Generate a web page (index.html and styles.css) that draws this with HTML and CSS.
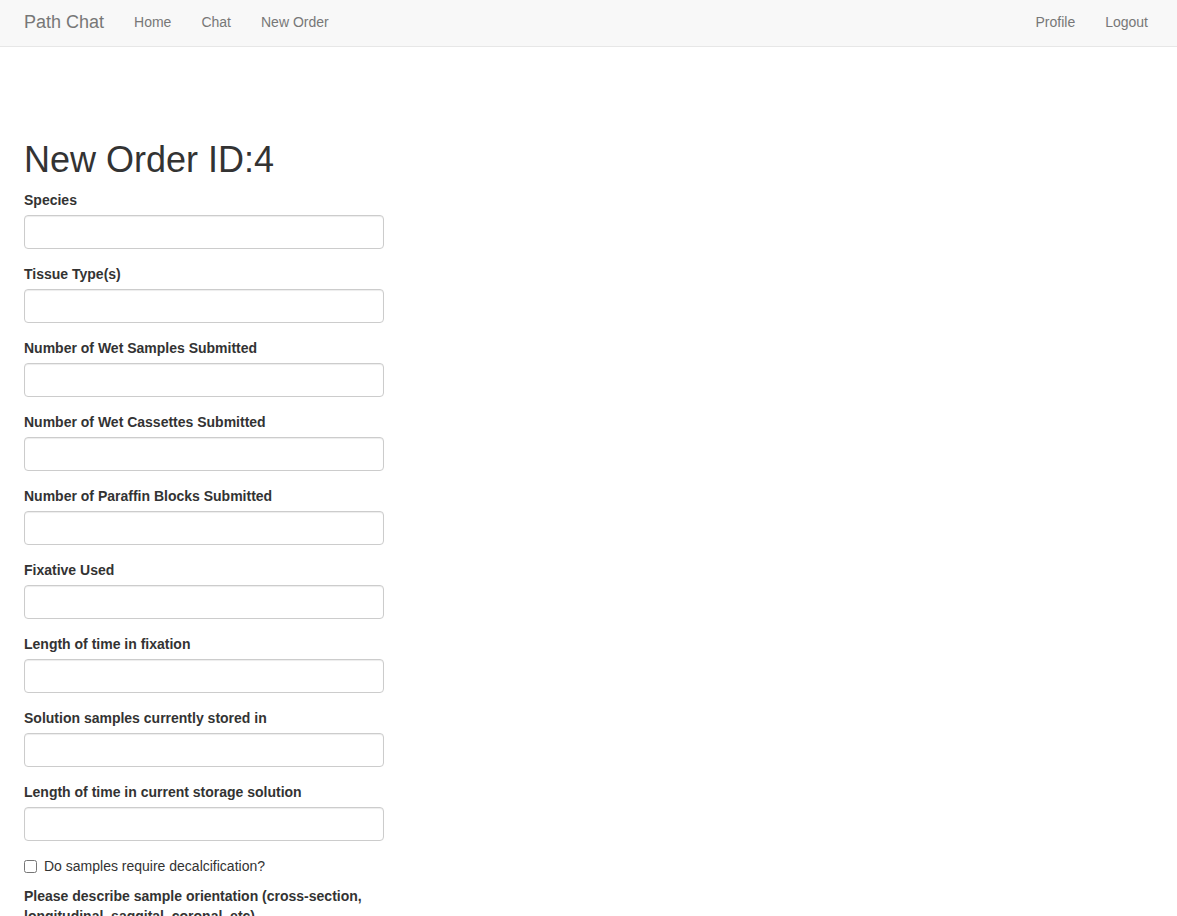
FILE: index.html
```html
<!DOCTYPE html>
<html>
<head>
<meta charset="utf-8">
<title>Path Chat - New Order</title>
<link rel="stylesheet" href="styles.css">
</head>
<body>
<nav class="navbar">
  <div class="nav-left">
    <a class="brand" href="#">Path Chat</a>
    <a class="nav-link" href="#">Home</a>
    <a class="nav-link" href="#">Chat</a>
    <a class="nav-link" href="#">New Order</a>
  </div>
  <div class="nav-right">
    <a class="nav-link" href="#">Profile</a>
    <a class="nav-link" href="#">Logout</a>
  </div>
</nav>
<main class="content">
  <h1 class="title">New Order ID:4</h1>
  <form class="order-form">
    <div class="form-group"><label>Species</label><input class="form-control" type="text"></div>
    <div class="form-group"><label>Tissue Type(s)</label><input class="form-control" type="text"></div>
    <div class="form-group"><label>Number of Wet Samples Submitted</label><input class="form-control" type="text"></div>
    <div class="form-group"><label>Number of Wet Cassettes Submitted</label><input class="form-control" type="text"></div>
    <div class="form-group"><label>Number of Paraffin Blocks Submitted</label><input class="form-control" type="text"></div>
    <div class="form-group"><label>Fixative Used</label><input class="form-control" type="text"></div>
    <div class="form-group"><label>Length of time in fixation</label><input class="form-control" type="text"></div>
    <div class="form-group"><label>Solution samples currently stored in</label><input class="form-control" type="text"></div>
    <div class="form-group"><label>Length of time in current storage solution</label><input class="form-control" type="text"></div>
    <div class="checkbox"><label class="check-label"><input type="checkbox" class="check"> Do samples require decalcification?</label></div>
    <div class="form-group"><label>Please describe sample orientation (cross-section, longitudinal, saggital, coronal, etc)</label><textarea class="form-control area"></textarea></div>
  </form>
</main>
</body>
</html>
```

FILE: styles.css
```css
* { box-sizing: border-box; }
html, body { margin: 0; padding: 0; }
body {
  font-family: "Liberation Sans", Arial, Helvetica, sans-serif;
  font-size: 14px;
  line-height: 20px;
  color: #333;
  background: #fff;
}
.navbar {
  height: 47px;
  background: #f8f8f8;
  border-bottom: 1px solid #e7e7e7;
  display: flex;
  justify-content: space-between;
  align-items: center;
  padding: 0 14px 2px 9px;
}
.nav-left, .nav-right { display: flex; align-items: center; }
.navbar a { text-decoration: none; color: #777; }
.brand {
  font-size: 18px;
  line-height: 20px;
  padding: 0 15px;
}
.nav-link {
  font-size: 14px;
  padding: 0 15px;
}
.content {
  padding: 93px 24px 0 24px;
}
.title {
  font-size: 36px;
  font-weight: 500;
  line-height: 40px;
  margin: 0 0 10px 0;
  color: #333;
}
.order-form { width: 360px; }
.form-group { margin-bottom: 15px; }
.form-group label {
  display: block;
  font-weight: bold;
  margin-bottom: 5px;
}
.form-control {
  display: block;
  width: 100%;
  height: 34px;
  padding: 6px 12px;
  font-family: inherit;
  font-size: 14px;
  color: #555;
  background: #fff;
  border: 1px solid #ccc;
  border-radius: 4px;
  box-shadow: inset 0 1px 1px rgba(0,0,0,.075);
}
.area { height: 54px; resize: vertical; }
.checkbox { margin: 0 0 10px 0; }
.check-label {
  display: flex;
  align-items: center;
  font-weight: normal;
  cursor: pointer;
}
.check {
  width: 13px;
  height: 13px;
  margin: 0 7px 0 0;
}
```
